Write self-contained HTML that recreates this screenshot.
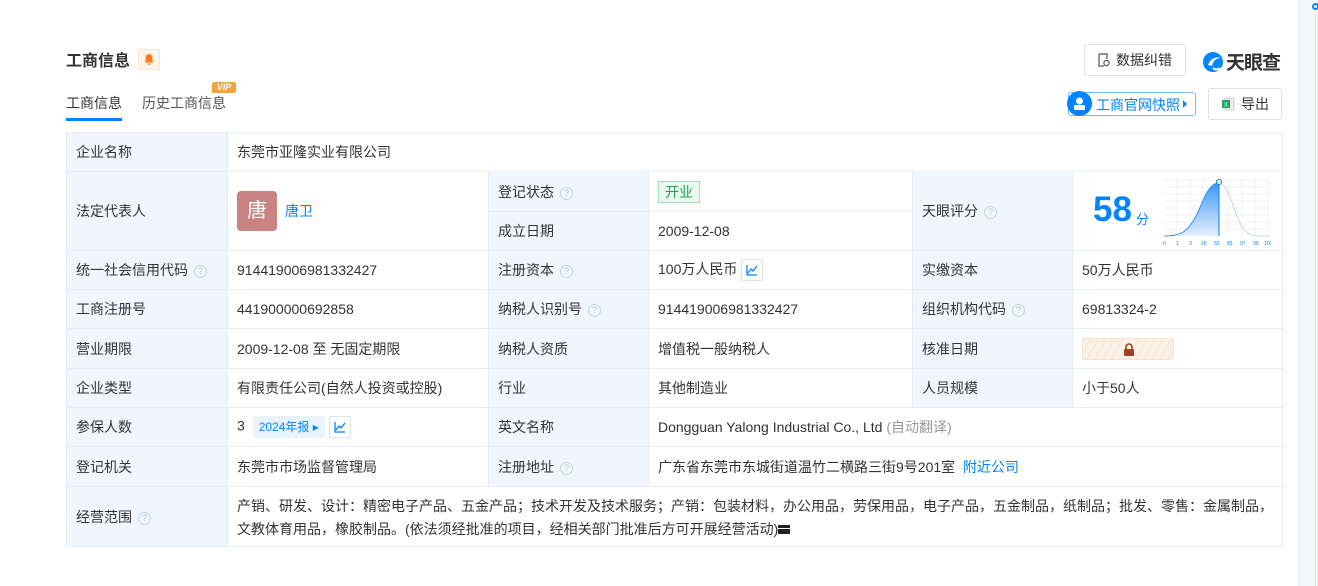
<!DOCTYPE html>
<html><head><meta charset="utf-8"><style>
*{margin:0;padding:0;box-sizing:border-box}
body{width:1318px;height:586px;background:#fff;font-family:"Liberation Sans","Noto Sans CJK SC",sans-serif;color:#333;font-size:14px;position:relative;overflow:hidden}
.side{position:absolute;left:1298px;top:0;width:20px;height:586px;background:#f5f6f8;border-left:1px solid #eceef2}
.side i{position:absolute;left:13px;top:3px;width:7px;height:7px;border:2px solid #0084ff;border-radius:50%;background:#fff}
.side b{position:absolute;left:16px;top:10px;width:1px;height:576px;background:#dde6f0}
.abs{position:absolute}
h1{position:absolute;left:66px;top:47px;font-size:16px;font-weight:bold;color:#333}
.bell{position:absolute;left:138px;top:49px;width:22px;height:21px;border:1px solid #fde3cc;background:#fff5ec;border-radius:2px}
.tab{position:absolute;top:93px;font-size:14px}
.btn{position:absolute;border:1px solid #dcdfe6;border-radius:3px;background:#fff;font-size:14px;color:#333;display:flex;align-items:center;justify-content:center;gap:6px}
table{position:absolute;left:66px;top:132px;width:1216px;border-collapse:collapse;table-layout:fixed}
td{border:1px solid #e4edf6;padding:0 9px;font-size:14px;color:#333;vertical-align:middle}
td.l{background:#eff6fd}
.q{display:inline-block;width:13px;height:13px;border:1px solid #c5d3e0;border-radius:50%;color:#b8c6d4;font-size:9px;line-height:11px;text-align:center;margin-left:6px;vertical-align:1px}
.blue{color:#0084ff}
.ch{display:inline-block;width:22px;height:22px;border:1px solid #dde3ea;border-radius:2px;vertical-align:middle;margin-left:4px;position:relative}
</style></head><body>
<div class="side"><b></b><i></i></div>
<h1>工商信息</h1>
<div class="bell"><svg width="20" height="19" viewBox="0 0 20 19"><path d="M10 4c-2.5 0-3.5 2-3.5 4v3l-1 1.5h9l-1-1.5V8c0-2-1-4-3.5-4z" fill="#ff7a1a"/><rect x="8.5" y="13.2" width="3" height="1.5" rx=".7" fill="#ff7a1a"/></svg></div>
<div class="tab" style="left:66px;color:#333">工商信息</div>
<div class="abs" style="left:66px;top:118px;width:56px;height:3px;background:#0084ff"></div>
<div class="tab" style="left:142px;color:#555">历史工商信息</div>
<div class="abs" style="left:212px;top:82px;width:24px;height:11px;background:#f5a23a;color:#fff;font-size:9px;font-weight:bold;font-style:italic;line-height:11px;text-align:center;border-radius:2px 2px 2px 0">VIP</div>
<div class="btn" style="left:1084px;top:44px;width:102px;height:32px"><svg width="12" height="14" viewBox="0 0 12 14"><path d="M1 1h8v5M1 1v12h5" fill="none" stroke="#555" stroke-width="1.2"/><circle cx="8.5" cy="10" r="2.6" fill="none" stroke="#555" stroke-width="1.2"/></svg>数据纠错</div>
<div class="abs" style="left:1202px;top:48px;display:flex;align-items:center;gap:2px"><svg width="22" height="22" viewBox="0 0 22 22"><circle cx="11" cy="11" r="10" fill="#0084ff"/><path d="M6 14c2-6 8-9 13-7-5 0-8 3-9 8" fill="#fff"/><path d="M11 17c2 2 5 2 7 0" stroke="#fff" stroke-width="2" fill="none"/></svg><span style="font-size:19px;font-weight:bold;color:#333;letter-spacing:-1px">天眼查</span></div>
<div class="abs" style="left:1068px;top:92px;width:128px;height:24px;border:1px solid #7ab8f5;border-radius:3px;background:#fff"></div>
<div class="abs" style="left:1067px;top:91px;width:25px;height:25px;border-radius:50%;background:#0084ff"><svg width="25" height="25" viewBox="0 0 25 25"><circle cx="12.5" cy="10" r="3.5" fill="#fff"/><rect x="7" y="14" width="11" height="5" rx="1" fill="#fff"/></svg></div>
<div class="abs" style="left:1096px;top:95px;color:#0084ff;font-size:14px">工商官网快照</div>
<div class="abs" style="left:1183px;top:100px;width:0;height:0;border-left:4px solid #0084ff;border-top:4px solid transparent;border-bottom:4px solid transparent"></div>
<div class="btn" style="left:1208px;top:88px;width:74px;height:32px"><svg width="14" height="14" viewBox="0 0 14 14"><rect x="4" y="1" width="9" height="12" fill="#e9f0ea" stroke="#c8d5cb"/><rect x="1" y="3" width="8" height="8" fill="#21a366"/><text x="5" y="9.5" font-size="6" fill="#fff" text-anchor="middle" font-family="Liberation Sans">X</text></svg>导出</div>

<table>
<colgroup><col style="width:161px"><col style="width:261px"><col style="width:160px"><col style="width:264px"><col style="width:160px"><col style="width:210px"></colgroup>
<tr style="height:39px"><td class="l">企业名称</td><td colspan="5">东莞市亚隆实业有限公司</td></tr>
<tr style="height:40px"><td class="l" rowspan="2">法定代表人</td><td rowspan="2"><span style="display:inline-block;width:40px;height:40px;background:#c98383;border-radius:4px;color:#fff;font-size:20px;line-height:40px;text-align:center;vertical-align:middle">唐</span><span class="blue" style="margin-left:8px;vertical-align:middle">唐卫</span></td><td class="l">登记状态<span class="q">?</span></td><td><span style="display:inline-block;border:1px solid #a3dfb5;background:#ebf8ef;color:#1aa55a;padding:0 6px;line-height:20px">开业</span></td><td class="l" rowspan="2">天眼评分<span class="q">?</span></td><td rowspan="2" style="position:relative"><span style="position:absolute;left:20px;top:18px;color:#0084ff;font-size:35px;font-weight:bold;font-family:'Liberation Sans',sans-serif">58</span><span style="position:absolute;left:63px;top:37px;color:#0084ff;font-size:13px">分</span>
<svg style="position:absolute;left:90px;top:6px" width="108" height="70" viewBox="0 0 108 70"><g stroke="#eef1f5" stroke-width="1"><path d="M1 2h105M1 9h105M1 16h105M1 23h105M1 30h105M1 37h105M1 44h105M1 51h105M14 2v56M27 2v56M40 2v56M53 2v56M66 2v56M79 2v56M92 2v56M105 2v56"/></g><defs><linearGradient id="g" x1="0" y1="0" x2="0" y2="1"><stop offset="0" stop-color="#3d96f5"/><stop offset="1" stop-color="#e4f0fd"/></linearGradient></defs><path d="M1 58C20 58 25 52 32 40S44 5 56 5V58Z" fill="url(#g)"/><path d="M1 58C20 58 25 52 32 40S44 5 56 5" fill="none" stroke="#2f8cf0"/><path d="M56 5C66 5 72 40 80 50S95 58 106 58" fill="none" stroke="#c9d5e2"/><path d="M56 5V58" stroke="#0084ff"/><circle cx="56" cy="4" r="2.5" fill="#fff" stroke="#0084ff"/><text y="67" font-size="5" fill="#0084ff" font-family="Liberation Sans"><tspan x="0">0</tspan><tspan x="13">1</tspan><tspan x="26">3</tspan><tspan x="38">15</tspan><tspan x="51">50</tspan><tspan x="64">85</tspan><tspan x="77">97</tspan><tspan x="90">99</tspan><tspan x="101">100</tspan></text></svg></td></tr>
<tr style="height:39px"><td class="l">成立日期</td><td>2009-12-08</td></tr>
<tr style="height:39px"><td class="l">统一社会信用代码<span class="q">?</span></td><td>914419006981332427</td><td class="l">注册资本<span class="q">?</span></td><td>100万人民币<span class="ch"><svg width="20" height="20" viewBox="0 0 20 20"><path d="M5 5v10h10M6 13l3-4 2 2 4-5" fill="none" stroke="#0084ff" stroke-width="1.3"/></svg></span></td><td class="l">实缴资本</td><td>50万人民币</td></tr>
<tr style="height:39px"><td class="l">工商注册号</td><td>441900000692858</td><td class="l">纳税人识别号<span class="q">?</span></td><td>914419006981332427</td><td class="l">组织机构代码<span class="q">?</span></td><td>69813324-2</td></tr>
<tr style="height:40px"><td class="l">营业期限</td><td>2009-12-08 至 无固定期限</td><td class="l">纳税人资质</td><td>增值税一般纳税人</td><td class="l">核准日期</td><td><span style="display:inline-block;width:92px;height:22px;border:1px solid #f6e3d3;border-radius:2px;background:repeating-linear-gradient(120deg,#fbf1e7 0 6px,#f7e6d6 6px 7px);position:relative;vertical-align:middle"><svg style="position:absolute;left:40px;top:4px" width="12" height="13" viewBox="0 0 12 13"><path d="M3 6V4a3 3 0 0 1 6 0v2" fill="none" stroke="#a0401f" stroke-width="1.6"/><rect x="1" y="6" width="10" height="7" rx="1" fill="#a0401f"/></svg></span></td></tr>
<tr style="height:39px"><td class="l">企业类型</td><td>有限责任公司(自然人投资或控股)</td><td class="l">行业</td><td>其他制造业</td><td class="l">人员规模</td><td>小于50人</td></tr>
<tr style="height:39px"><td class="l">参保人数</td><td>3 <span style="display:inline-block;background:#eaf4fe;color:#0084ff;font-size:12px;padding:0 6px;line-height:22px;border-radius:2px;margin-left:4px;vertical-align:middle">2024年报 ▸</span><span class="ch"><svg width="20" height="20" viewBox="0 0 20 20"><path d="M5 5v10h10M6 13l3-4 2 2 4-5" fill="none" stroke="#0084ff" stroke-width="1.3"/></svg></span></td><td class="l">英文名称</td><td colspan="3">Dongguan Yalong Industrial Co., Ltd <span style="color:#999">(自动翻译)</span></td></tr>
<tr style="height:40px"><td class="l">登记机关</td><td>东莞市市场监督管理局</td><td class="l">注册地址<span class="q">?</span></td><td colspan="3">广东省东莞市东城街道温竹二横路三街9号201室 <span class="blue" style="margin-left:4px">附近公司</span></td></tr>
<tr style="height:60px"><td class="l">经营范围<span class="q">?</span></td><td colspan="5" style="line-height:23px;padding-top:2px">产销、研发、设计：精密电子产品、五金产品；技术开发及技术服务；产销：包装材料，办公用品，劳保用品，电子产品，五金制品，纸制品；批发、零售：金属制品，文教体育用品，橡胶制品。(依法须经批准的项目，经相关部门批准后方可开展经营活动)<span style="display:inline-block;width:12px;height:9px;background:#222;border-top:3px solid #222;box-shadow:inset 0 1px #fff;vertical-align:0"></span></td></tr>
</table>
</body></html>
